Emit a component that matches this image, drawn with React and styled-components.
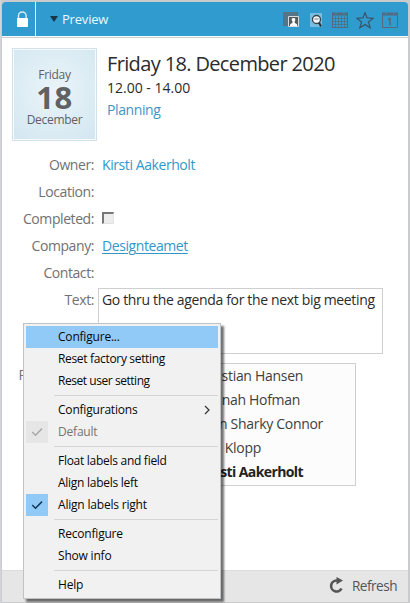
import React from "react";
import styled, { createGlobalStyle } from "styled-components";

const Global = createGlobalStyle`
  * { box-sizing: border-box; }
  body { margin: 0; background: #c9c9c9; font-family: "Open Sans", "Noto Sans", sans-serif; }
`;

const Frame = styled.div`
  position: relative;
  width: 410px;
  height: 603px;
  overflow: hidden;
  display: flex;
  flex-direction: column;
  padding: 2px 2px 1px 1px;
  border-left: 1px solid #d3d5da;
  background: #c9cbcd;
`;
const Header = styled.header`
  display: flex;
  align-items: center;
  flex: 0 0 34px;
  background: #2f9bcf;
  border-radius: 4px 4px 0 0;
`;
const LockCell = styled.div`
  width: 34px;
  height: 34px;
  padding: 9px 0 0 14px;
  border-right: 1px solid #e6f4fb;
`;
const Title = styled.button`
  display: flex;
  align-items: center;
  gap: 4px;
  padding: 0;
  margin: 0 0 0 14px;
  border: 0;
  background: none;
  color: #e8f8ff;
  font: 13px/20px "Open Sans", sans-serif;
  letter-spacing: -0.2px;
`;
const Tools = styled.div`
  display: flex;
  margin-left: auto;
  padding: 2px 10px 0 0;
  gap: 8px;
`;
const Body = styled.main`
  flex: 1;
  background: #fff;
  border-top: 1px solid #f4fbff;
  box-shadow: inset 0 1px #d2d0c4;
`;
const Summary = styled.section`
  display: flex;
  height: 114px;
  padding: 11px 0 0 10px;
`;
const DateCard = styled.div`
  width: 85px;
  height: 93px;
  border: 1px solid #d3e1ea;
  box-shadow: inset 0 0 0 1px #f6fafc;
  background: radial-gradient(circle at 50% 45%, #eaf4f8 0, #dcecf4 60%, #d2e6f0 100%);
  display: flex;
  flex-direction: column;
  align-items: center;
  padding-top: 18px;
  color: #606163;
  font-size: 12px;
  line-height: 16px;
  letter-spacing: -0.3px;
`;
const Day = styled.strong`
  font-size: 31px;
  line-height: 28px;
  margin: 0 0 1px;
  letter-spacing: 0.4px;
`;
const Heading = styled.div`
  margin-left: 10px;
  padding-top: 3px;
`;
const H1 = styled.h1`
  margin: 0;
  font-size: 20px;
  font-weight: 400;
  line-height: 26px;
  letter-spacing: -0.64px;
  color: #2b2b2b;
  white-space: nowrap;
`;
const Line = styled.div`
  font-size: 14px;
  line-height: 22px;
  letter-spacing: ${(p) => (p.$link ? "-0.4px" : "0")};
  color: ${(p) => (p.$link ? "#3d96c6" : "#2b2b2b")};
`;
const Row = styled.div`
  display: flex;
  height: 27px;
  font-size: 14px;
  line-height: 27px;
  letter-spacing: -0.42px;
`;
const Label = styled.span`
  width: 92px;
  margin-right: 8px;
  flex: none;
  text-align: right;
  color: #707173;
`;
const Value = styled.span`
  color: #3298ca;
  text-decoration: ${(p) => (p.$underline ? "underline" : "none")};
  text-underline-offset: 2px;
  text-decoration-thickness: 1px;
`;
const Check = styled.span`
  width: 12px;
  height: 12px;
  margin-top: 7px;
  background: #ededed;
  border: 1px solid #e2e2e2;
  border-top: 2px solid #777;
  border-left: 2px solid #777;
`;
const TextRow = styled(Row)`
  height: 75px;
`;
const TextBox = styled.div`
  width: 285px;
  height: 66px;
  margin: 2px 0 0 -4px;
  padding: 0 3px;
  border: 1px solid #cfcfcf;
  line-height: 21px;
  color: #2b2b2b;
  letter-spacing: -0.34px;
  white-space: nowrap;
`;
const People = styled.div`
  width: 258px;
  height: 123px;
  margin: 2px 0 0 -4px;
  background: #fcfcfc;
  border: 1px solid #cfcfcf;
`;
const Person = styled.div`
  height: 24px;
  line-height: 24px;
  padding-right: ${(p) => p.$end}px;
  text-align: right;
  color: ${(p) => (p.$main ? "#222" : "#404040")};
  font-weight: ${(p) => (p.$main ? 700 : 400)};
  letter-spacing: ${(p) => (p.$main ? -0.6 : -0.3)}px;
  word-spacing: ${(p) => p.$gap || 0}px;
`;
const Footer = styled.footer`
  flex: 0 0 32px;
  display: flex;
  align-items: center;
  justify-content: flex-end;
  gap: 8px;
  padding-right: 11px;
  border-top: 1px solid #dcdcdc;
  background: #e6e6e6;
  color: #555;
  font-size: 13.6px;
  line-height: 20px;
  padding-bottom: 2px;
  letter-spacing: -0.5px;
`;
const Menu = styled.div`
  position: absolute;
  left: 22px;
  top: 323px;
  width: 198px;
  padding: 2px;
  border: 1px solid #bfc3c6;
  background: #f1f1f1;
  box-shadow: 3px 3px 2px rgba(0, 0, 0, 0.55);
`;
const Item = styled.div`
  display: flex;
  align-items: center;
  height: 22px;
  font-size: 12px;
  line-height: 20px;
  letter-spacing: ${(p) => p.$track || -0.2}px;
  color: ${(p) => (p.$muted ? "#757575" : "#080808")};
  background: ${(p) => (p.$active ? "#91c9f7" : "none")};
`;
const Mark = styled.span`
  width: 22px;
  height: 22px;
  margin-right: 10px;
  padding: 5px;
  background: ${(p) => p.$bg || "none"};
  line-height: 0;
`;
const Caption = styled.span`
  padding-bottom: 1px;
`;
const Arrow = styled.svg`
  margin: 0 8px 0 auto;
`;
const Separator = styled.div`
  height: 7px;
  margin-left: 28px;
  background: linear-gradient(#d5d5d5, #d5d5d5) 0 3px / 100% 1px no-repeat;
`;

const Tick = ({ color }) => (
  <svg width="12" height="12" viewBox="0 0 12 12" fill="none" stroke={color} strokeWidth="1.5">
    <path d="M1.2 6 L4.5 9.2 L11 2.6" />
  </svg>
);

const MenuItem = ({ children, tick, tickBg, sub, ...rest }) => (
  <Item {...rest}>
    <Mark $bg={tickBg}>{tick && <Tick color={tick} />}</Mark>
    <Caption>{children}</Caption>
    {sub && (
      <Arrow width="6" height="10" viewBox="0 0 6 10" fill="none" stroke="#333" strokeWidth="1.2">
        <path d="M1 1 L5 5 L1 9" />
      </Arrow>
    )}
  </Item>
);

const Calendar = ({ day }) => (
  <svg width="16" height="16" viewBox="0 0 16 16" fill="none" stroke="#536b7c">
    <path d="M.5 2.5h15v13H.5z" />
    <path d="M0 2h16" strokeWidth="3" />
    <path d="M3 1.5h2M11 1.5h2" stroke="#2f8dbb" />
    {day ? (
      <path d="M6 7.500l2-1v7" strokeWidth="1.5" />
    ) : (
      <path d="M3.5 4v11M6.5 4v11M9.5 4v11M12.5 4v11M1 6.5h14M1 9.5h14M1 12.5h14" strokeWidth=".7" />
    )}
  </svg>
);

export default function App() {
  return (
    <Frame>
      <Global />
      <Header>
        <LockCell>
          <svg width="13" height="17" viewBox="0 0 13 17">
            <path d="M2.5 8V4.8a3.8 3.8 0 0 1 7.6 0V8" fill="none" stroke="#d6edf8" strokeWidth="1.4" />
            <rect x="1" y="7" width="11" height="9" rx=".7" fill="#fff" />
          </svg>
        </LockCell>
        <Title>
          <svg width="8" height="6" viewBox="0 0 8 6">
            <path d="M0 0h8L4 6z" fill="#183447" />
          </svg>
          Preview
        </Title>
        <Tools>
          <svg width="17" height="16" viewBox="0 0 17 16">
            <path d="M0 0h15v14H0z" fill="#557487" />
            <path d="M5.5 4.500h10v10h-10z" fill="#555b5d" stroke="#d5dde1" />
            <path d="M7 14c0-2 .5-2.500 2.500-3V9.500C8 7.500 8.500 6 10.500 6S13 7.500 11.700 9.500V11c2 .5 2.500 1 2.500 3z" fill="#fff" />
          </svg>
          <svg width="16" height="16" viewBox="0 0 16 16">
            <path d="M2 1h12v14H2z" fill="#78bddf" />
            <circle cx="8.500" cy="7.500" r="4" fill="#f3f7f8" stroke="#35424a" strokeWidth="1.3" />
            <path d="M6.500 7h4" stroke="#727e85" />
            <path d="M11 10.500l2 4" stroke="#26333b" strokeWidth="2" />
          </svg>
          <Calendar />
          <svg width="18" height="17" viewBox="0 0 18 17" fill="none" stroke="#36586d" strokeWidth="1.300">
            <path d="M9 .8l2.100 5.200 6 .4-4.600 3.700 1.600 5.600L9 12.600l-5.100 3.100 1.600-5.600L.9 6.400l6-.4z" />
          </svg>
          <Calendar day />
        </Tools>
      </Header>
      <Body>
        <Summary>
          <DateCard>
            Friday
            <Day>18</Day>
            December
          </DateCard>
          <Heading>
            <H1>Friday 18. December 2020</H1>
            <Line>12.00 - 14.00</Line>
            <Line $link>Planning</Line>
          </Heading>
        </Summary>
        <Row><Label>Owner:</Label><Value>Kirsti Aakerholt</Value></Row>
        <Row><Label>Location:</Label></Row>
        <Row><Label>Completed:</Label><Check /></Row>
        <Row><Label>Company:</Label><Value $underline>Designteamet</Value></Row>
        <Row><Label>Contact:</Label></Row>
        <TextRow>
          <Label>Text:</Label>
          <TextBox>Go thru the agenda for the next big meeting</TextBox>
        </TextRow>
        <Row>
          <Label>Participants:</Label>
          <People>
            <Person $end={52}>Christian Hansen</Person>
            <Person $end={55}>Hannah Hofman</Person>
            <Person $end={32}>John Sharky Connor</Person>
            <Person $end={94} $gap={3}>Jan Klopp</Person>
            <Person $end={52} $main>Kirsti Aakerholt</Person>
          </People>
        </Row>
      </Body>
      <Footer>
        <svg width="15" height="17" viewBox="0 0 15 17">
          <path d="M9.500 3.500H7.500a5.500 5.500 0 1 0 5 8" fill="none" stroke="#555" strokeWidth="2.600" />
          <path d="M7.500 0L14 3.600 7.500 7.500z" fill="#555" />
        </svg>
        Refresh
      </Footer>
      <Menu>
        <MenuItem $active>Configure...</MenuItem>
        <MenuItem $track={-0.33}>Reset factory setting</MenuItem>
        <MenuItem $track={-0.45}>Reset user setting</MenuItem>
        <Separator />
        <MenuItem sub>Configurations</MenuItem>
        <MenuItem $muted tick="#aaa" tickBg="#e6e6e6">Default</MenuItem>
        <Separator />
        <MenuItem $track={-0.28}>Float labels and field</MenuItem>
        <MenuItem $track={-0.27}>Align labels left</MenuItem>
        <MenuItem tick="#123a5a" tickBg="#91c9f7">Align labels right</MenuItem>
        <Separator />
        <MenuItem>Reconfigure</MenuItem>
        <MenuItem>Show info</MenuItem>
        <Separator />
        <MenuItem>Help</MenuItem>
      </Menu>
    </Frame>
  );
}
